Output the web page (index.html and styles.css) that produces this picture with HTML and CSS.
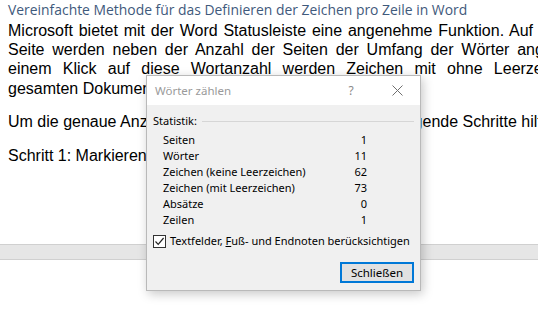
FILE: index.html
```html
<!DOCTYPE html>
<html lang="de">
<head>
    <meta charset="UTF-8">
    <meta name="viewport" content="width=device-width, initial-scale=1.0">
    <title>Wörter zählen</title>
    <link rel="stylesheet" href="styles.css">
</head>
<body>
    <div class="page">
        <h1 class="doc-title">Vereinfachte Methode für das Definieren der Zeichen pro Zeile in Word</h1>

        <p class="doc-text">
            <span class="line line-1">Microsoft bietet mit der Word Statusleiste eine angenehme Funktion. Auf</span>
            <span class="line line-2">Seite werden neben der Anzahl der Seiten der Umfang der Wörter angezeigt.</span>
            <span class="line line-3">einem Klick auf diese Wortanzahl werden Zeichen mit ohne Leerzeichen</span>
            <span class="line">gesamten Dokument angezeigt.</span>
        </p>

        <p class="doc-text">
            <span class="line">Um die genaue Anzahl der Zeichen zu zählen, können folgende Schritte hilfreich sein:</span>
        </p>

        <p class="doc-text">
            <span class="line">Schritt 1: Markieren Sie die gewünschte Zeile.</span>
        </p>
    </div>

    <div class="page-break"></div>

    <!-- Dialog liegt über dem Dokument -->
    <div class="dialog">
        <div class="dialog-title">
            <span class="dialog-caption">Wörter zählen</span>
            <span class="title-button">?</span>
            <span class="title-button">
                <svg width="11" height="11" viewBox="0 0 11 11">
                    <path d="M0.5 0.5 L10.5 10.5 M10.5 0.5 L0.5 10.5" stroke="#6f6f6f" stroke-width="1" fill="none"/>
                </svg>
            </span>
        </div>

        <div class="dialog-body">
            <div class="group-label">
                <span>Statistik:</span>
                <span class="group-line"></span>
            </div>

            <table class="stats">
                <tr><td>Seiten</td><td class="num">1</td></tr>
                <tr><td>Wörter</td><td class="num">11</td></tr>
                <tr><td>Zeichen (keine Leerzeichen)</td><td class="num">62</td></tr>
                <tr><td>Zeichen (mit Leerzeichen)</td><td class="num">73</td></tr>
                <tr><td>Absätze</td><td class="num">0</td></tr>
                <tr><td>Zeilen</td><td class="num">1</td></tr>
            </table>

            <label class="check-row">
                <span class="check-box">
                    <svg width="11" height="11" viewBox="0 0 11 11">
                        <path d="M1.5 5.5 L4.2 8.3 L9.6 2" stroke="#222" stroke-width="1.2" fill="none"/>
                    </svg>
                </span>
                <span>Textfelder, <u>F</u>uß- und Endnoten berücksichtigen</span>
            </label>

            <div class="button-row">
                <button class="dialog-button">Schließen</button>
            </div>
        </div>
    </div>
</body>
</html>
```

FILE: styles.css
```css
* {
    box-sizing: border-box;
    margin: 0;
    padding: 0;
}

html,
body {
    width: 538px;
    height: 313px;
    overflow: hidden;
    background: white;
}

body {
    position: relative;
    font-family: "Liberation Sans", Arial, sans-serif;
    color: #000;
}

.page {
    padding: 0 0 0 8px;
    overflow: hidden;
}

.doc-title {
    font-family: "Open Sans", "Noto Sans", sans-serif;
    font-weight: normal;
    font-size: 13.9px;
    line-height: 20.7px;
    color: #3f5a7c;
    white-space: nowrap;
}

.doc-text {
    font-size: 16px;
    line-height: 19.3px;
    margin-bottom: 14.5px;
}

.doc-text:last-child {
    margin-bottom: 0;
}

.line {
    display: block;
    white-space: nowrap;
}

.line-1,
.line-2,
.line-3 {
    white-space: normal;
    text-align: justify;
    text-align-last: justify;
}

.line-1 {
    width: 525px;
}

.line-2 {
    width: 583px;
}

.line-3 {
    width: 573px;
}

.page-break {
    margin-top: 78.5px;
    height: 16px;
    background: #e6e6e6;
    border-top: 1px solid #d0d0d0;
    border-bottom: 1px solid #d0d0d0;
}

/* Dialog */

.dialog {
    position: absolute;
    left: 146px;
    top: 75px;
    width: 275px;
    height: 216px;
    background: #f0f0f0;
    border: 1px solid #b9b9b9;
    box-shadow: 2px 3px 10px rgba(0, 0, 0, 0.22);
    font-family: "Noto Sans", "Open Sans", sans-serif;
    font-size: 11px;
    color: #000;
    display: flex;
    flex-direction: column;
}

.dialog-title {
    height: 29px;
    background: white;
    display: flex;
    align-items: center;
    padding-left: 8px;
}

.dialog-caption {
    flex: 1;
    font-size: 11.5px;
    color: #9a9a9a;
}

.title-button {
    width: 46px;
    height: 29px;
    display: flex;
    align-items: center;
    justify-content: center;
    color: #8a8a8a;
    font-size: 12px;
}

.dialog-body {
    flex: 1;
    padding: 8px 6px 7px 6px;
    display: flex;
    flex-direction: column;
}

.group-label {
    display: flex;
    align-items: center;
    gap: 5px;
    line-height: 16px;
}

.group-line {
    flex: 1;
    height: 1px;
    background: #d6d6d6;
}

.stats {
    margin: 3px 0 0 10px;
    width: 204px;
    border-collapse: collapse;
}

.stats td {
    padding: 0;
    line-height: 16px;
    height: 16px;
}

.stats .num {
    text-align: right;
}

.check-row {
    margin-top: 5px;
    display: flex;
    align-items: center;
    gap: 4px;
    line-height: 16px;
    white-space: nowrap;
}

.check-box {
    width: 13px;
    height: 13px;
    border: 1px solid #333;
    background: white;
    display: flex;
    align-items: center;
    justify-content: center;
}

.button-row {
    margin-top: auto;
    display: flex;
    justify-content: flex-end;
}

.dialog-button {
    width: 74px;
    height: 21px;
    background: #e1e1e1;
    border: 2px solid #0078d7;
    font-family: inherit;
    font-size: 11.5px;
    color: #000;
}
```
